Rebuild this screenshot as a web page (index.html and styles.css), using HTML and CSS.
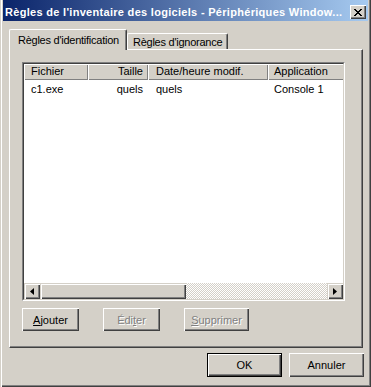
FILE: index.html
```html
<!DOCTYPE html>
<html lang="fr">
<head>
    <meta charset="UTF-8">
    <title>Règles de l'inventaire des logiciels</title>
    <link rel="stylesheet" href="styles.css">
</head>
<body>
    <div class="window">
        <div class="titlebar">
            <span class="title">Règles de l'inventaire des logiciels - Périphériques Window...</span>
            <span class="close-btn">
                <svg width="8" height="7" viewBox="0 0 8 7"><path d="M0 0h2v1h1v1h2v-1h1v-1h2v1h-1v1h-1v1h-1v1h1v1h1v1h1v1h-2v-1h-1v-1h-2v1h-1v1h-2v-1h1v-1h1v-1h1v-1h-1v-1h-1v-1h-1z" fill="#000"/></svg>
            </span>
        </div>

        <div class="content">
            <div class="tabs">
                <div class="tab active">Règles d'identification</div>
                <div class="tab">Règles d'ignorance</div>
            </div>

            <div class="panel">
                <div class="listview">
                    <div class="list-inner">
                        <div class="list-row header">
                            <div class="col hdr">Fichier</div>
                            <div class="col hdr right">Taille</div>
                            <div class="col hdr wide">Date/heure modif.</div>
                            <div class="col hdr">Application</div>
                        </div>
                        <div class="list-row item">
                            <div class="col">c1.exe</div>
                            <div class="col right">quels</div>
                            <div class="col wide">quels</div>
                            <div class="col">Console 1</div>
                        </div>
                        <div class="list-fill"></div>
                        <div class="hscroll">
                            <span class="sb-btn">
                                <svg width="4" height="7" viewBox="0 0 4 7"><path d="M4 0v7L0 3.5z" fill="#000"/></svg>
                            </span>
                            <span class="sb-thumb"></span>
                            <span class="sb-track"></span>
                            <span class="sb-btn">
                                <svg width="4" height="7" viewBox="0 0 4 7"><path d="M0 0v7l4-3.5z" fill="#000"/></svg>
                            </span>
                        </div>
                    </div>
                </div>

                <div class="panel-buttons">
                    <button class="btn"><u>A</u>jouter</button>
                    <button class="btn" disabled>Édi<u>t</u>er</button>
                    <button class="btn wide-btn" disabled><u>S</u>upprimer</button>
                </div>
            </div>

            <div class="footer">
                <button class="btn dlg default">OK</button>
                <button class="btn dlg">Annuler</button>
            </div>
        </div>
    </div>
</body>
</html>
```

FILE: styles.css
```css
body {
    margin: 0;
    background: #d4d0c8;
    font-family: "Liberation Sans", Arial, sans-serif;
    font-size: 11px;
    color: #000;
}
.window {
    width: 371px;
    height: 387px;
    box-sizing: border-box;
    padding: 0 3px 3px 3px;
    background: #d4d0c8;
    box-shadow: inset 1px 0 #d4d0c8, inset 2px 0 #fff, inset -1px -1px #404040, inset -2px -2px #808080;
}
.titlebar {
    height: 21px;
    display: flex;
    align-items: center;
    justify-content: space-between;
    padding: 0 2px 0 2px;
    background: linear-gradient(to right, #0a246a, #a6caf0);
    color: #fff;
}
.title {
    font-weight: bold;
    font-size: 11px;
    letter-spacing: 0.3px;
    white-space: nowrap;
    padding-top: 3px;
}
.close-btn {
    width: 16px;
    height: 14px;
    box-sizing: border-box;
    margin-top: 3px;
    display: flex;
    align-items: center;
    justify-content: center;
    background: #d4d0c8;
    box-shadow: inset 1px 1px #fff, inset -1px -1px #404040, inset -2px -2px #808080;
}
.content {
    padding: 8px 3px 0 6px;
}
.tabs {
    display: flex;
    align-items: flex-end;
    height: 20px;
    position: relative;
    z-index: 1;
}
.tab {
    height: 16px;
    box-sizing: border-box;
    padding: 1px 5px 0 5px;
    line-height: 14px;
    letter-spacing: -0.25px;
    white-space: nowrap;
    background: #d4d0c8;
    border-top: 1px solid #fff;
    border-left: 1px solid #fff;
    border-right: 1px solid #404040;
    border-radius: 2px 2px 0 0;
    box-shadow: inset -1px 0 #808080;
}
.tab.active {
    height: 21px;
    width: 118px;
    padding: 3px 0 0 8px;
    margin-bottom: -1px;
}
.panel {
    height: 299px;
    box-sizing: border-box;
    width: 354px;
    padding: 12px 0 0 12px;
    border-top: 1px solid #fff;
    border-left: 1px solid #fff;
    border-right: 1px solid #404040;
    border-bottom: 1px solid #404040;
    box-shadow: inset -1px -1px #808080;
}
.listview {
    width: 323px;
    height: 239px;
    box-sizing: border-box;
    border-top: 1px solid #808080;
    border-left: 1px solid #808080;
    border-right: 1px solid #fff;
    border-bottom: 1px solid #fff;
}
.list-inner {
    height: 100%;
    box-sizing: border-box;
    border-top: 1px solid #404040;
    border-left: 1px solid #404040;
    border-right: 1px solid #d4d0c8;
    border-bottom: 1px solid #d4d0c8;
    background: #fff;
    display: flex;
    flex-direction: column;
    overflow: hidden;
}
.list-row {
    display: flex;
    white-space: nowrap;
}
.col {
    flex: 0 0 64px;
    box-sizing: border-box;
    padding: 0 5px 0 7px;
}
.col:nth-child(2) {
    flex-basis: 60px;
}
.col.wide {
    flex-basis: 120px;
    padding-left: 8px;
}
.col:last-child {
    flex-basis: 120px;
    padding-left: 6px;
}
.right {
    text-align: right;
}
.header .hdr {
    height: 16px;
    line-height: 15px;
    background: #d4d0c8;
    box-shadow: inset 1px 1px #fff, inset -1px -1px #808080;
}
.item .col {
    height: 14px;
    line-height: 14px;
    margin-top: 2px;
}
.list-fill {
    flex: 1;
}
.hscroll {
    height: 16px;
    display: flex;
    background: repeating-conic-gradient(#fff 0 25%, #d4d0c8 0 50%) 0 0 / 2px 2px;
}
.sb-btn,
.sb-thumb {
    flex: 0 0 16px;
    height: 16px;
    box-sizing: border-box;
    background: #d4d0c8;
    display: flex;
    align-items: center;
    justify-content: center;
    box-shadow: inset 1px 1px #d4d0c8, inset 2px 2px #fff, inset -1px -1px #404040, inset -2px -2px #808080;
}
.sb-thumb {
    flex-basis: 146px;
}
.sb-track {
    flex: 1;
}
.panel-buttons {
    display: flex;
    gap: 24px;
    margin-top: 7px;
}
.btn {
    font-family: "Liberation Sans", Arial, sans-serif;
    font-size: 11px;
    color: #000;
    width: 57px;
    height: 23px;
    padding: 0;
    border: none;
    background: #d4d0c8;
    box-shadow: inset 1px 1px #fff, inset -1px -1px #404040, inset -2px -2px #808080;
}
.btn.wide-btn {
    width: 65px;
}
.btn:disabled {
    color: #808080;
    text-shadow: 1px 1px #fff;
}
.footer {
    display: flex;
    justify-content: flex-end;
    gap: 7px;
    padding: 5px 1px 0 0;
}
.btn.dlg {
    width: 75px;
    height: 24px;
}
.btn.default {
    box-shadow: inset 0 0 0 1px #000, inset 2px 2px #fff, inset -2px -2px #404040, inset -3px -3px #808080;
}
```
